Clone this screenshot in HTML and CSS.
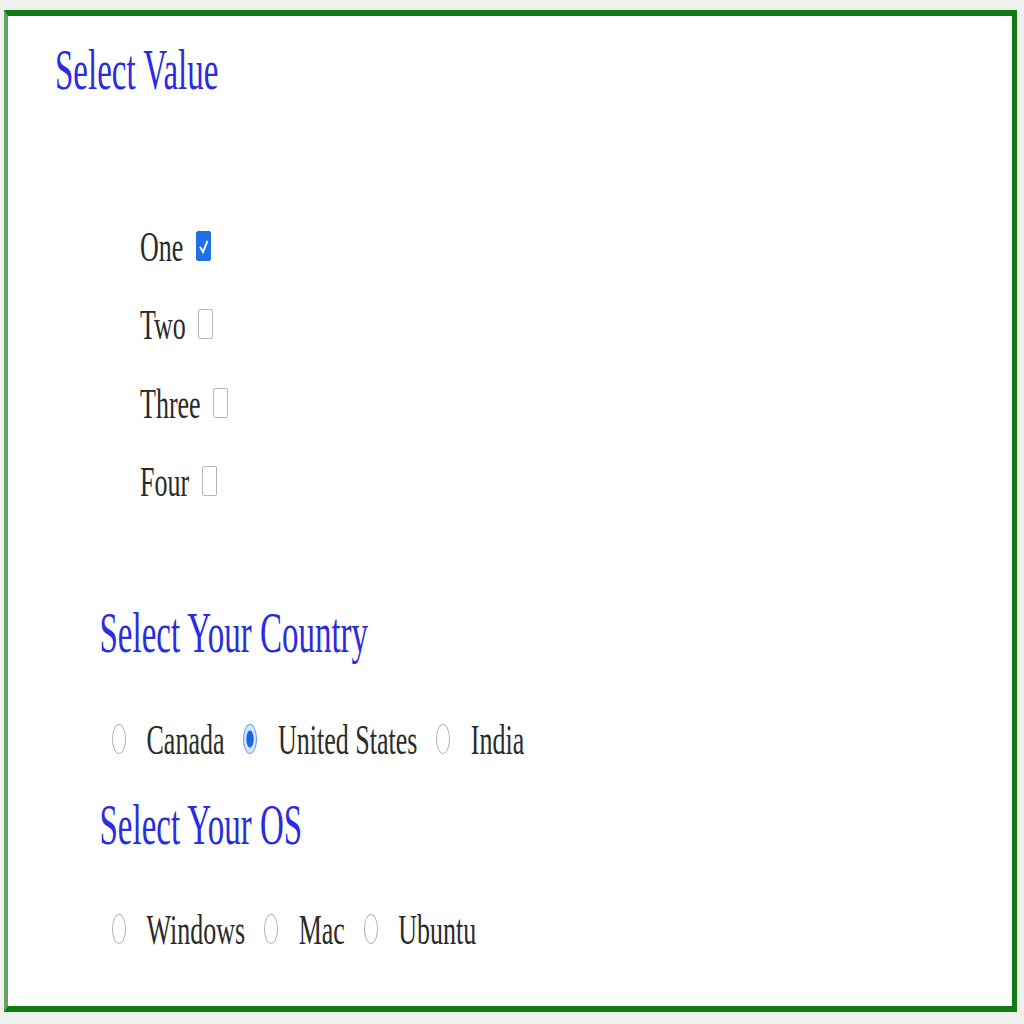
FILE: index.html
```html
<!DOCTYPE html>
<html lang="en">
<head>
    <meta charset="UTF-8">
    <title>Select Value</title>
    <link rel="stylesheet" href="styles.css">
</head>
<body>
    <div class="panel">
        <h2 class="title"><span class="tall-head">Select Value</span></h2>

        <ul class="checks">
            <li><span class="tall">One</span> <input type="checkbox" checked></li>
            <li><span class="tall">Two</span> <input type="checkbox"></li>
            <li><span class="tall">Three</span> <input type="checkbox"></li>
            <li><span class="tall">Four</span> <input type="checkbox"></li>
        </ul>

        <div class="group country">
            <h3 class="group-title"><span class="tall-head">Select Your Country</span></h3>
            <div class="options">
                <input type="radio" name="country" id="canada"> <label for="canada" class="tall">Canada</label>
                <input type="radio" name="country" id="us" checked> <label for="us" class="tall">United States</label>
                <input type="radio" name="country" id="india"> <label for="india" class="tall">India</label>
            </div>
        </div>

        <div class="group os">
            <h3 class="group-title"><span class="tall-head">Select Your OS</span></h3>
            <div class="options">
                <input type="radio" name="os" id="windows"> <label for="windows" class="tall">Windows</label>
                <input type="radio" name="os" id="mac"> <label for="mac" class="tall">Mac</label>
                <input type="radio" name="os" id="ubuntu"> <label for="ubuntu" class="tall">Ubuntu</label>
            </div>
        </div>
    </div>
</body>
</html>
```

FILE: styles.css
```css
body {
    margin: 0;
    padding: 0;
    background-color: #eef2ee;
    font-family: "Liberation Serif", "Times New Roman", serif;
    color: #2b2b2b;
}

.panel {
    box-sizing: border-box;
    width: 1013px;
    height: 1002px;
    margin: 10px 0 0 4px;
    background-color: #fff;
    border: 6px solid #137a13;
    border-left: 4px solid #63a363;
    border-right-width: 5px;
}

/* the original capture is stretched vertically, text keeps its baseline */
.tall,
.tall-head {
    display: inline-block;
    line-height: 1;
    transform-origin: 0 0.8375em;
}

.tall {
    transform: scaleY(1.6);
}

.tall-head {
    transform: scaleY(1.7);
}

.title {
    margin: 46.4px 0 0 47px;
    font-size: 33px;
    font-weight: normal;
    line-height: 1;
    color: #2b2be0;
}

.checks {
    list-style: none;
    margin: 144.8px 0 0 132px;
    padding: 0;
    display: flex;
    flex-direction: column;
    gap: 52.3px;
}

.checks li {
    font-size: 26px;
    line-height: 26px;
    height: 26px;
}

input[type="checkbox"] {
    appearance: none;
    box-sizing: border-box;
    width: 15px;
    height: 30px;
    margin: -10px 0 0 6px;
    vertical-align: baseline;
    border: 1px solid #b4b4b4;
    border-radius: 2px;
    background-color: #fff;
}

input[type="checkbox"]:checked {
    border-color: #1f6fe6;
    background-color: #1f6fe6;
    background-image: url("data:image/svg+xml;utf8,<svg xmlns='http://www.w3.org/2000/svg' viewBox='0 0 15 30'><path d='M3.5 16l3.5 6 5-13' fill='none' stroke='white' stroke-width='2.2'/></svg>");
    background-size: 100% 100%;
}

.group {
    margin-left: 91.5px;
}

.group-title {
    margin: 0;
    font-size: 33px;
    font-weight: normal;
    line-height: 1;
    color: #2b2be0;
}

.country {
    margin-top: 124.3px;
}

.os {
    margin-top: 58.2px;
}

.options {
    font-size: 26px;
    line-height: 26px;
    height: 26px;
    white-space: nowrap;
}

.country .options {
    margin-top: 74.8px;
}

.os .options {
    margin-top: 72.8px;
}

input[type="radio"] {
    appearance: none;
    box-sizing: border-box;
    width: 14px;
    height: 30px;
    margin: -10px 14px 0 12.5px;
    vertical-align: baseline;
    border: 1px solid #b0b0b0;
    border-radius: 50%;
    background-color: #fff;
}

input[type="radio"]:checked {
    border: 1.5px solid #5b97f0;
    background: radial-gradient(#1a66e0 38%, #d6e6fc 48%);
}
```
